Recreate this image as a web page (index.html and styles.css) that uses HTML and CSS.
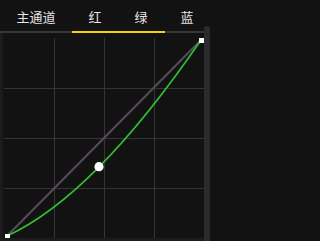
FILE: index.html
```html
<!DOCTYPE html>
<html>
<head>
<meta charset="utf-8">
<link rel="stylesheet" href="styles.css">
</head>
<body>
<div class="app">
  <div class="tabs">
    <div class="tab">主通道</div>
    <div class="tab">红</div>
    <div class="tab">绿</div>
    <div class="tab">蓝</div>
  </div>
  <div class="divider"><div class="indicator"></div></div>
  <div class="panel">
    <svg class="plot" width="200" height="200" viewBox="0 0 200 200">
      <g stroke="#353535" stroke-width="1">
        <line x1="50.5" y1="0" x2="50.5" y2="200"/>
        <line x1="100.5" y1="0" x2="100.5" y2="200"/>
        <line x1="150.5" y1="0" x2="150.5" y2="200"/>
        <line x1="0" y1="50.5" x2="200" y2="50.5"/>
        <line x1="0" y1="100.5" x2="200" y2="100.5"/>
        <line x1="0" y1="150.5" x2="200" y2="150.5"/>
      </g>
      <line x1="3" y1="198" x2="197" y2="2" stroke="#544c5a" stroke-width="2"/>
      <path d="M3 198 Q90 158 197 2" fill="none" stroke="#2ec52e" stroke-width="1.6"/>
      <rect x="1" y="196" width="5" height="5" fill="#fff"/>
      <rect x="195" y="0" width="5" height="5" fill="#fff"/>
      <circle cx="95" cy="128.7" r="4.6" fill="#fff"/>
    </svg>
  </div>
  <div class="scrollbar"></div>
</div>
</body>
</html>
```

FILE: styles.css
```css
html, body {
  margin: 0;
  padding: 0;
  background: #121212;
}
.app {
  position: relative;
  width: 210px;
  height: 241px;
  overflow: hidden;
  background: #121212;
  font-family: "Noto Sans CJK SC", "Noto Sans", sans-serif;
}
.tabs {
  display: flex;
  height: 31px;
  box-sizing: border-box;
  padding-top: 3px;
}
.tab {
  padding: 0 16.5px;
  font-size: 13px;
  line-height: 28px;
  color: #e6e6e6;
  white-space: nowrap;
}
.divider {
  position: relative;
  height: 2px;
  background: #363636;
}
.indicator {
  position: absolute;
  left: 72px;
  width: 93px;
  top: 0;
  height: 2px;
  background: #f2d20c;
}
.panel {
  height: 208px;
  box-sizing: border-box;
  border-left: 3px solid #1c1c1c;
  border-bottom: 3px solid #1c1c1c;
  padding: 5px 0 0 1px;
}
.plot {
  display: block;
}
.scrollbar {
  position: absolute;
  left: 204px;
  top: 26px;
  width: 6px;
  bottom: 0;
  background: #2b2b2b;
  border-radius: 3px 3px 0 0;
}
```
